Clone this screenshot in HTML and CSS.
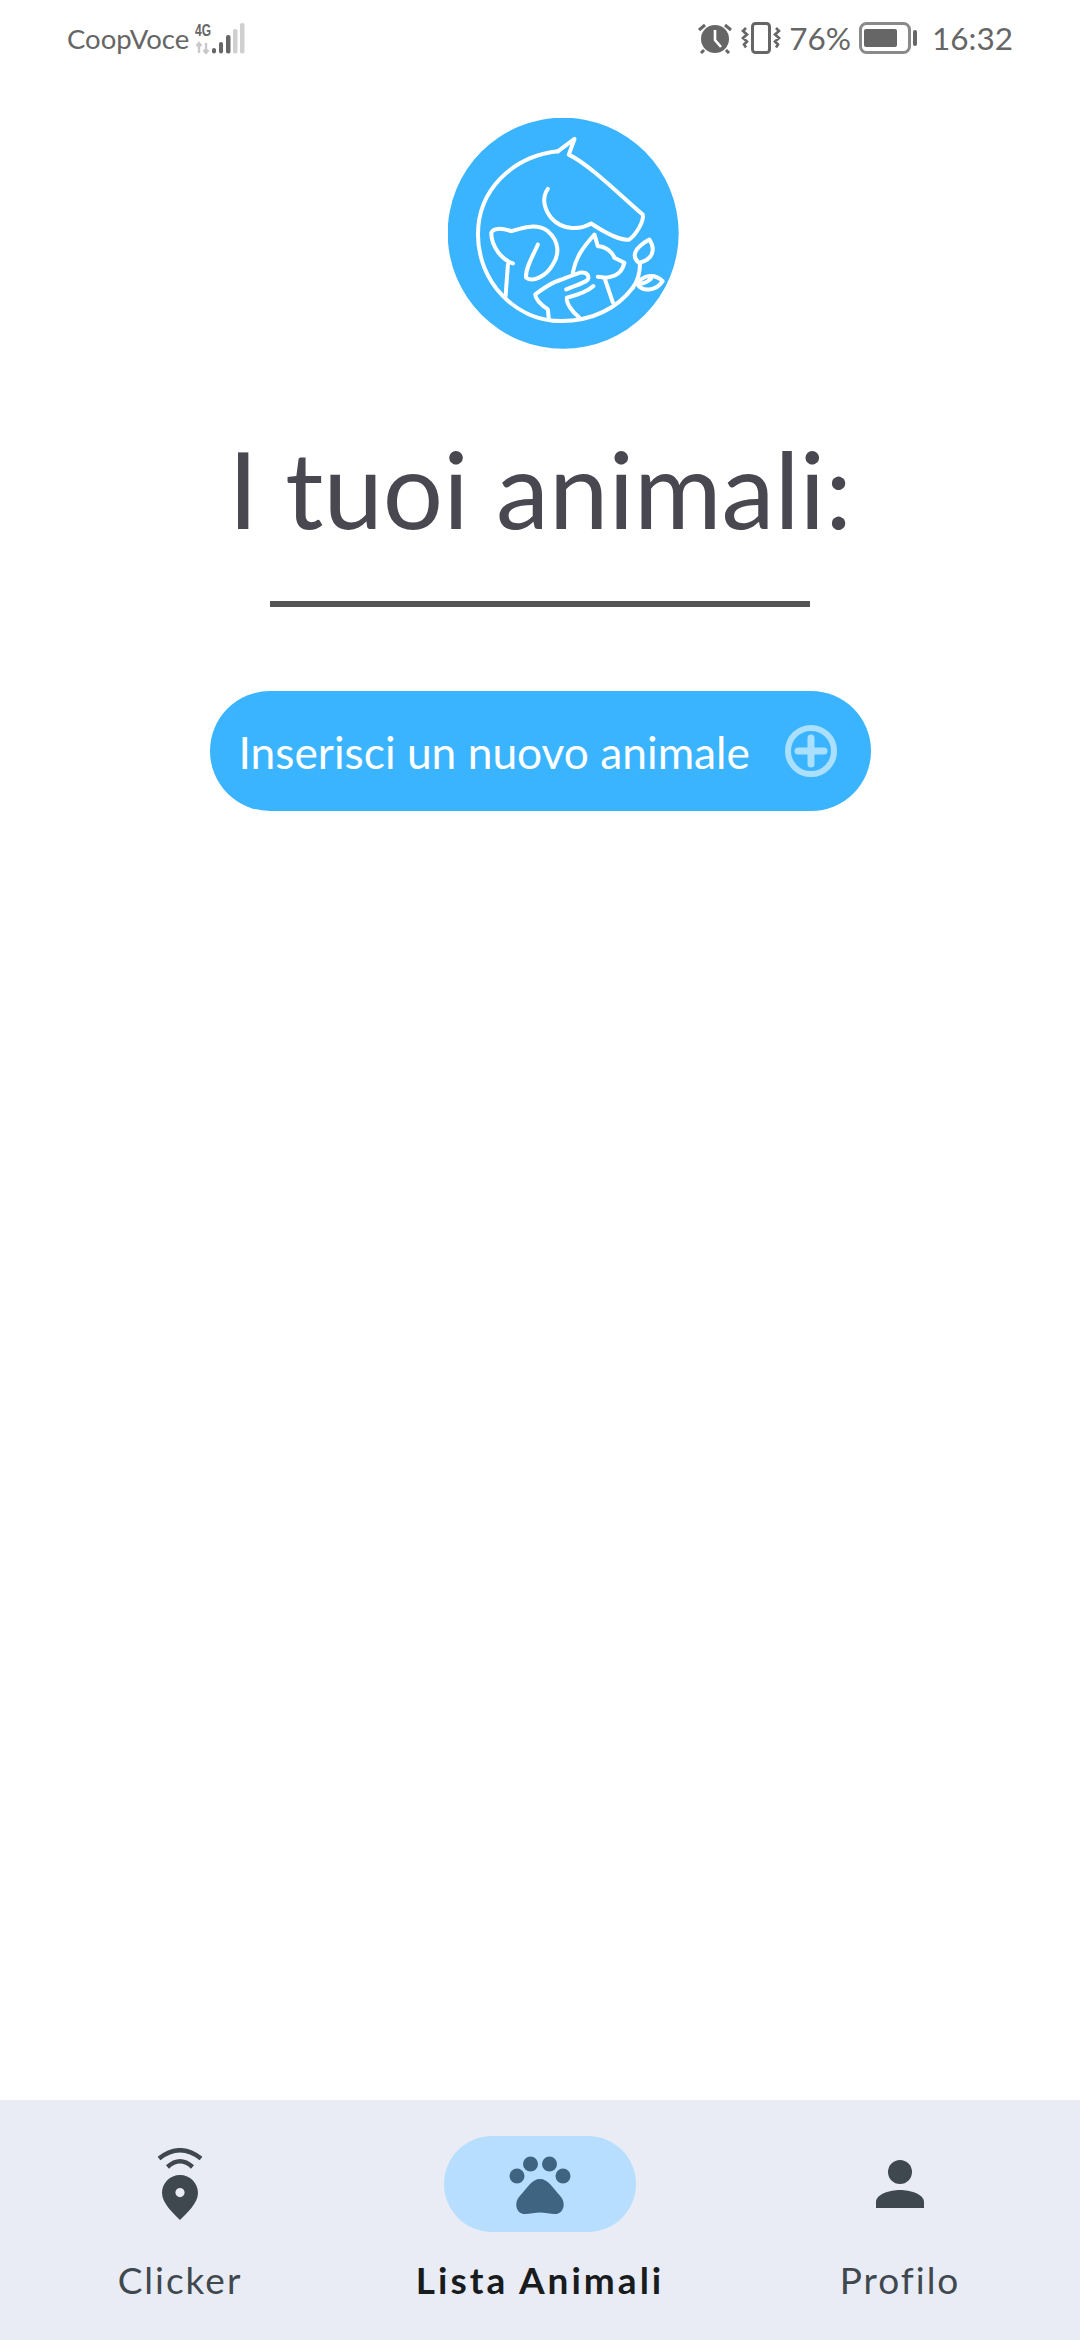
FILE: index.html
```html
<!DOCTYPE html>
<html lang="it">
<head>
    <meta charset="UTF-8">
    <meta name="viewport" content="width=device-width, initial-scale=1.0">
    <title>I tuoi animali</title>
    <link rel="stylesheet" href="styles.css">
</head>
<body>
    <div class="app">
        <!-- Barra di stato -->
        <div class="status-bar">
            <div class="status-left">
                <span class="carrier">CoopVoce</span>
                <svg class="signal" width="50" height="32" viewBox="0 0 50 32">
                    <text x="0" y="14" class="signal-label" textLength="16" lengthAdjust="spacingAndGlyphs">4G</text>
                    <path d="M4 31V21M1.500 24l2.500-3 2.500 3M11 21v10M8.500 28l2.500 3 2.500-3" fill="none" stroke="#c9c9c9" stroke-width="2.400"/>
                    <rect x="17" y="26" width="4" height="5.500" rx="2" fill="#666"/>
                    <rect x="24" y="20" width="4" height="11.500" rx="2" fill="#666"/>
                    <rect x="31" y="13" width="4.500" height="18.500" rx="2" fill="#666"/>
                    <rect x="38" y="7" width="4.500" height="24.500" rx="2" fill="#cfcfcf"/>
                    <rect x="45" y="1" width="4.500" height="30.500" rx="2" fill="#cfcfcf"/>
                </svg>
            </div>
            <div class="status-right">
                <svg width="36" height="32" viewBox="0 0 36 32">
                    <circle cx="18" cy="17" r="14" fill="#666"/>
                    <path d="M18 8v10l6 7" fill="none" stroke="#fff" stroke-width="2.600"/>
                    <path d="M2 8l6-5M34 8l-6-5M7 28l-3 3M29 28l3 3" fill="none" stroke="#666" stroke-width="3"/>
                </svg>
                <svg class="vibrate" width="40" height="32" viewBox="0 0 40 32">
                    <rect x="11.500" y="1.500" width="17" height="29" rx="3" fill="none" stroke="#666" stroke-width="3"/>
                    <path d="M5 6l-3 3 4 3.500-4 3.500 4 3.500-3 3 2 3M35 6l3 3-4 3.500 4 3.500-4 3.500 3 3-2 3" fill="none" stroke="#666" stroke-width="2.600"/>
                </svg>
                <span class="pct">76%</span>
                <svg class="battery" width="58" height="32" viewBox="0 0 58 32">
                    <rect x="1.500" y="1.500" width="49" height="29" rx="6" fill="none" stroke="#8a8a8a" stroke-width="3"/>
                    <rect x="5" y="7" width="33" height="18" rx="2" fill="#666"/>
                    <rect x="54" y="8" width="4" height="16" rx="2" fill="#666"/>
                </svg>
                <span class="clock">16:32</span>
            </div>
        </div>

        <main class="content">
            <div class="logo-row">
                <svg class="logo" width="231" height="231" viewBox="55 55 694 694">
                    <circle cx="401" cy="401" r="347" fill="#3bb4ff"/>
                    <g fill="none" stroke="#fff" stroke-width="12" stroke-linecap="round" stroke-linejoin="round">
                        <!-- cerchio e cavallo -->
                        <path d="M385 155C250 170 145 270 145 405C145 545 255 665 395 665C490 665 565 625 610 565"/>
                        <path d="M385 155L435 118L418 165C480 195 570 285 640 345C645 365 620 405 600 420C570 425 520 395 485 372C455 390 400 395 365 355C345 330 335 295 355 268"/>
                        <!-- foglie -->
                        <path d="M610 565C625 545 632 520 632 490M628 490C605 470 615 445 660 420C680 450 670 482 628 490Z"/>
                        <path d="M622 552C640 530 672 518 700 545C680 575 640 580 622 552ZM622 552C640 555 650 550 665 538"/>
                        <!-- cane -->
                        <path d="M250 492C215 480 185 440 185 400C190 385 215 385 245 395C280 385 320 370 355 395C390 425 390 465 370 495C350 530 310 550 290 535C285 510 310 470 325 435"/>
                        <path d="M235 495L228 590"/>
                        <path d="M450 520C475 515 485 535 470 545C450 555 430 562 410 570M492 560C470 580 440 588 412 595C410 610 425 635 450 655M450 520C420 530 400 540 375 548C350 560 335 572 317 585C318 605 340 620 355 630L358 660"/>
                        <!-- gatto -->
                        <path d="M430 520C440 470 460 445 495 405L505 440C530 440 550 460 555 475L585 490C580 510 570 530 530 535L505 532M525 535L550 608"/>
                    </g>
                </svg>
            </div>
            <h1 class="title">I tuoi animali:</h1>
            <div class="divider"></div>
            <button class="add-btn">
                <span>Inserisci un nuovo animale</span>
                <svg width="52" height="52" viewBox="0 0 52 52">
                    <circle cx="26" cy="26" r="23" fill="none" stroke="#abdffe" stroke-width="6"/>
                    <path d="M26 13v26M13 26h26" fill="none" stroke="#abdffe" stroke-width="7" stroke-linecap="round"/>
                </svg>
            </button>
        </main>

        <!-- Barra di navigazione -->
        <nav class="nav-bar">
            <div class="nav-item">
                <div class="nav-icon">
                    <svg width="72" height="72" viewBox="0 0 72 72">
                        <path d="M15 10.500Q36 -6 57 10.500M23.500 19Q36 7.500 48.500 19" fill="none" stroke="#40484f" stroke-width="4.500"/>
                        <path fill-rule="evenodd" fill="#40484f" d="M36 27C46 27 54 35 54 45C54 55 43 65 36 72C29 65 18 55 18 45C18 35 26 27 36 27ZM36 40A4.600 4.600 0 1 0 36 49.200A4.600 4.600 0 1 0 36 40Z"/>
                    </svg>
                </div>
                <span class="nav-label">Clicker</span>
            </div>
            <div class="nav-item active">
                <div class="nav-icon">
                    <svg width="72" height="72" viewBox="0 0 72 72" fill="#3f6482">
                        <circle cx="13" cy="28" r="7.500"/>
                        <circle cx="26.500" cy="16" r="7.500"/>
                        <circle cx="45.500" cy="16" r="7.500"/>
                        <circle cx="59" cy="28" r="7.500"/>
                        <path d="M36 31C40 31 43 33 46 36L57 49C62 55 60 66 51 66C46 66 41 64.500 36 64.500C31 64.500 26 66 21 66C12 66 10 55 15 49L26 36C29 33 32 31 36 31Z"/>
                    </svg>
                </div>
                <span class="nav-label">Lista Animali</span>
            </div>
            <div class="nav-item">
                <div class="nav-icon">
                    <svg width="72" height="72" viewBox="0 0 72 72" fill="#40484f">
                        <circle cx="36" cy="24" r="12"/>
                        <path d="M12 60V54C12 46 26 42 36 42C46 42 60 46 60 54V60Z"/>
                    </svg>
                </div>
                <span class="nav-label">Profilo</span>
            </div>
        </nav>
    </div>
</body>
</html>
```

FILE: styles.css
```css
body {
    margin: 0;
    padding: 0;
    background: #fff;
    font-family: "Lato", sans-serif;
}

.app {
    width: 1080px;
    height: 2340px;
    display: flex;
    flex-direction: column;
    overflow: hidden;
}

.status-bar {
    height: 78px;
    padding: 0 67px;
    box-sizing: border-box;
    display: flex;
    justify-content: space-between;
    align-items: center;
    color: #666;
}

.status-left {
    display: flex;
    align-items: center;
    gap: 6px;
    margin-top: -2px;
}

.carrier {
    font-size: 27.500px;
}

.signal-label {
    font-family: "Liberation Sans", sans-serif;
    font-size: 16px;
    font-weight: 700;
    fill: #666;
}

.status-right {
    display: flex;
    align-items: center;
    gap: 8px;
    margin-top: -2px;
}

.pct, .clock {
    font-size: 31.500px;
}

.clock {
    margin-left: 7px;
}

.content {
    flex: 1;
    display: flex;
    flex-direction: column;
    align-items: center;
}

.logo-row {
    margin-top: 40px;
    padding-left: 47px;
    height: 231px;
}

.logo {
    display: block;
}

.title {
    margin: 76px 0 0;
    font-size: 106.500px;
    font-weight: 400;
    line-height: 126px;
    color: #49474f;
}

.divider {
    width: 540px;
    height: 6px;
    margin-top: 50px;
    background: #555;
}

.add-btn {
    width: 661px;
    height: 120px;
    margin-top: 84px;
    padding: 0 34px 0 29px;
    display: flex;
    justify-content: space-between;
    align-items: center;
    border: none;
    border-radius: 60px;
    background: #3bb4ff;
    color: #fff;
    font-family: "Lato", sans-serif;
    font-size: 44.300px;
}

.nav-bar {
    height: 240px;
    display: grid;
    grid-template-columns: 1fr 1fr 1fr;
    background: #e9ecf4;
}

.nav-item {
    display: flex;
    flex-direction: column;
    align-items: center;
    padding-top: 36px;
}

.nav-icon {
    width: 192px;
    height: 96px;
    border-radius: 48px;
    display: flex;
    justify-content: center;
    align-items: center;
}

.nav-item.active .nav-icon {
    background: #b7deff;
}

.nav-label {
    margin-top: 26px;
    font-size: 37px;
    line-height: 44px;
    letter-spacing: 2px;
    color: #40484f;
}

.nav-item.active .nav-label {
    font-weight: 700;
    letter-spacing: 3px;
    color: #191c1f;
}
```
